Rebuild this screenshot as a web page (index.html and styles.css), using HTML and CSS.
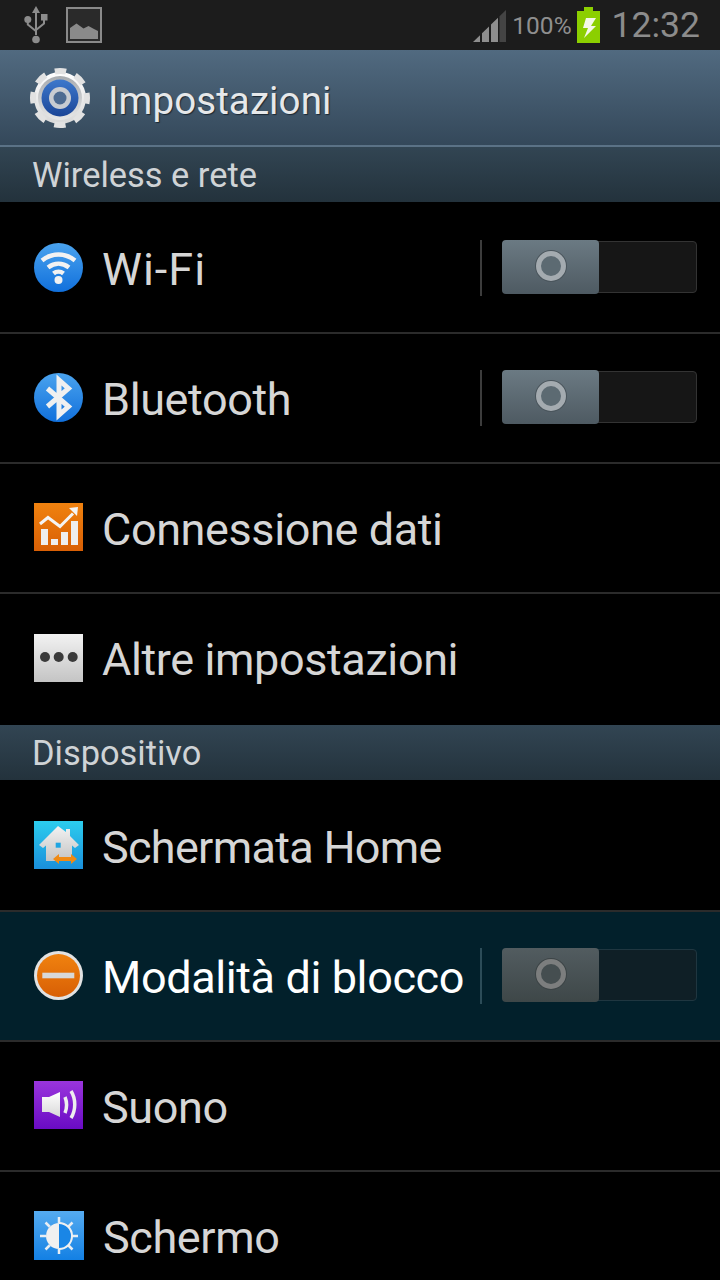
FILE: index.html
```html
<!DOCTYPE html>
<html lang="it">
<head>
	<meta charset="UTF-8">
	<title>Impostazioni</title>
	<link rel="stylesheet" href="styles.css">
</head>
<body>
	<svg class="defs" width="0" height="0">
		<defs>
			<linearGradient id="gBlue" x1="0" y1="0" x2="0" y2="1"><stop offset="0" stop-color="#4aa3ee"/><stop offset="1" stop-color="#1170dc"/></linearGradient>
			<linearGradient id="gOrange" x1="0" y1="0" x2="0" y2="1"><stop offset="0" stop-color="#f0820f"/><stop offset="1" stop-color="#d85f05"/></linearGradient>
			<linearGradient id="gGrey" x1="0" y1="0" x2="0" y2="1"><stop offset="0" stop-color="#f2f2f2"/><stop offset="1" stop-color="#c4c4c4"/></linearGradient>
			<linearGradient id="gHome" x1="0" y1="0" x2="0" y2="1"><stop offset="0" stop-color="#2ccdee"/><stop offset="1" stop-color="#1a8fdb"/></linearGradient>
			<linearGradient id="gPurple" x1="0" y1="0" x2="0" y2="1"><stop offset="0" stop-color="#9a35dc"/><stop offset="1" stop-color="#6a0bc4"/></linearGradient>
			<linearGradient id="gSun" x1="0" y1="0" x2="0" y2="1"><stop offset="0" stop-color="#55abf0"/><stop offset="1" stop-color="#1380e4"/></linearGradient>
			<linearGradient id="gWhite" x1="0" y1="0" x2="0" y2="1"><stop offset="0" stop-color="#ffffff"/><stop offset="1" stop-color="#d8d8d8"/></linearGradient>
			<linearGradient id="gGear" x1="0" y1="0" x2="0" y2="1"><stop offset="0" stop-color="#3d78cc"/><stop offset="1" stop-color="#1b4698"/></linearGradient>
			<linearGradient id="gSilver" x1="0" y1="0" x2="0" y2="1"><stop offset="0" stop-color="#a8acb0"/><stop offset="1" stop-color="#e8e8e8"/></linearGradient>
		</defs>
	</svg>

	<div class="statusBar">
		<svg class="usbIcon" width="24" height="38" viewBox="0 0 24 38">
			<path d="M12 0l4 7h-3v22h-2V7H8z" fill="#8c8c8c"/>
			<circle cx="12" cy="33.500" r="3.800" fill="#8c8c8c"/>
			<circle cx="3.800" cy="13.500" r="3.500" fill="#8c8c8c"/>
			<rect x="17" y="8" width="6.500" height="6.500" fill="#8c8c8c"/>
			<path d="M3.800 15v3.500l8 6.500M20 14v3.500l-8 6.500" fill="none" stroke="#8c8c8c" stroke-width="2"/>
		</svg>
		<svg class="picIcon" width="36" height="36" viewBox="0 0 36 36">
			<rect x="1" y="1" width="34" height="34" fill="#2a2a2a" stroke="#8a8a8a" stroke-width="2"/>
			<path d="M4 32V21l6.500-4.500 7 5 5-2.500 5.500 3 4 2v8z" fill="#8a8a8a"/>
		</svg>
		<div class="statusRight">
			<svg class="signalIcon" width="33" height="32" viewBox="0 0 33 32">
				<path d="M0 32l7-6.800V32z" fill="#8e8e8e"/>
				<path d="M9 23.300l7-6.800V32H9z" fill="#8e8e8e"/>
				<path d="M18 14.500l7-6.700V32h-7z" fill="#8e8e8e"/>
				<path d="M26.500 6.300L33 0v32h-6.500z" fill="#444444"/>
			</svg>
			<span class="batteryText">100%</span>
			<svg class="batteryIcon" width="23" height="36" viewBox="0 0 23 36">
				<path d="M7 0h9v4h7v32H0V4h7z" fill="#8ccf00"/>
				<path d="M9 11h10l-5 8h5L7 31l4-10H6z" fill="#f4f8e8"/>
			</svg>
			<span class="clock">12:32</span>
		</div>
	</div>

	<div class="actionBar">
		<svg class="gearIcon" width="60" height="62" viewBox="0 0 60 62">
			<circle cx="30" cy="31" r="26" fill="url(#gWhite)"/>
			<circle cx="30" cy="31" r="27" fill="none" stroke="#e2e2e2" stroke-width="6" stroke-dasharray="11.500 9.706" stroke-dashoffset="5.750"/>
			<circle cx="30" cy="31" r="22" fill="url(#gSilver)"/>
			<circle cx="30" cy="31" r="18.500" fill="url(#gGear)"/>
			<circle cx="30" cy="31" r="11" fill="#c8ccd2"/>
			<circle cx="30" cy="31" r="6.500" fill="#4d6b92"/>
		</svg>
		<span class="actionTitle">Impostazioni</span>
	</div>

	<div class="sectionHead">Wireless e rete</div>
	<div class="row first">
		<svg class="icon" width="49" height="49" viewBox="0 0 49 49">
			<circle cx="24.500" cy="24.500" r="24.500" fill="url(#gBlue)"/>
			<path d="M8 17.500c10-8 23-8 33 0M14 24.500c6.500-5 14.500-5 21 0M19.500 30.500c3-2.500 7-2.500 10 0" fill="none" stroke="#f2f2f2" stroke-width="4.500"/>
			<circle cx="24.500" cy="37" r="4" fill="#f2f2f2"/>
		</svg>
		<span class="rowText wifi">Wi-Fi</span>
		<div class="switch">
			<div class="thumb"><i></i></div>
		</div>
	</div>
	<div class="row">
		<svg class="icon" width="49" height="49" viewBox="0 0 49 49">
			<circle cx="24.500" cy="24.500" r="24.500" fill="url(#gBlue)"/>
			<path d="M13.500 15.500l21 18-9.500 8.500V7l9.500 8.500-21 18" fill="none" stroke="#f0f0f0" stroke-width="5"/>
		</svg>
		<span class="rowText">Bluetooth</span>
		<div class="switch">
			<div class="thumb"><i></i></div>
		</div>
	</div>
	<div class="row">
		<svg class="icon" width="49" height="48" viewBox="0 0 49 48">
			<rect width="49" height="48" fill="url(#gOrange)"/>
			<rect x="7" y="26" width="7" height="16" fill="#eeeeee"/>
			<rect x="17" y="36" width="7" height="6" fill="#eeeeee"/>
			<rect x="27" y="29" width="7" height="13" fill="#eeeeee"/>
			<rect x="37" y="18" width="7" height="24" fill="#eeeeee"/>
			<path d="M6 21l8-6.500 12 9 13-13" fill="none" stroke="#f4f4f4" stroke-width="3"/>
			<path d="M35 5l9-1-1 9z" fill="#f4f4f4"/>
		</svg>
		<span class="rowText">Connessione dati</span>
	</div>
	<div class="row last">
		<svg class="icon" width="49" height="48" viewBox="0 0 49 48">
			<rect width="49" height="48" fill="url(#gGrey)"/>
			<circle cx="11" cy="23" r="5" fill="#3a3a3a"/>
			<circle cx="24.700" cy="23" r="5" fill="#3a3a3a"/>
			<circle cx="38.700" cy="23" r="5" fill="#3a3a3a"/>
		</svg>
		<span class="rowText">Altre impostazioni</span>
	</div>

	<div class="sectionHead">Dispositivo</div>
	<div class="row first">
		<svg class="icon" width="49" height="48" viewBox="0 0 49 48">
			<rect width="49" height="48" fill="url(#gHome)"/>
			<path d="M24 5L5 24l4 3 3-2.500V40h26V24.500l3 2.500 4-3-9-9V8h-4v3z" fill="url(#gGrey)"/>
			<rect x="21.700" y="21.700" width="5" height="5" fill="#1fa5e2"/>
			<path d="M19 38l6-5v3h12v-3l6 5-6 5v-3H25v3z" fill="#f08a14"/>
		</svg>
		<span class="rowText tight">Schermata Home</span>
	</div>
	<div class="row active">
		<svg class="icon" width="49" height="49" viewBox="0 0 49 49">
			<circle cx="24.500" cy="24.500" r="24.500" fill="#e2e2e2"/>
			<circle cx="24.500" cy="24.500" r="21.500" fill="url(#gOrange)"/>
			<rect x="8.300" y="21.700" width="32" height="5.600" fill="#d8d8d8"/>
		</svg>
		<span class="rowText">Modalità di blocco</span>
		<div class="switch">
			<div class="thumb"><i></i></div>
		</div>
	</div>
	<div class="row">
		<svg class="icon" width="49" height="48" viewBox="0 0 49 48">
			<rect width="49" height="48" fill="url(#gPurple)"/>
			<path d="M8 16h7l11-5v25l-11-5H8z" fill="url(#gWhite)"/>
			<path d="M31 16c2 5 2 11 0 16M37 10c5 8 5 19 0 27" fill="none" stroke="#eeeeee" stroke-width="3.500"/>
		</svg>
		<span class="rowText">Suono</span>
	</div>
	<div class="row">
		<svg class="icon" width="50" height="49" viewBox="0 0 50 49">
			<rect width="50" height="49" fill="url(#gSun)"/>
			<path d="M25 6v37M6 25h38M11.500 11.500l27 27M38.500 11.500l-27 27" stroke="#e8eef4" stroke-width="2.500"/>
			<circle cx="25" cy="25" r="13" fill="#1a86e6"/>
			<path d="M25 12a13 13 0 0 0 0 26z" fill="#f0f0f0"/>
			<path d="M25 12a13 13 0 0 1 0 26" fill="none" stroke="#f0f0f0" stroke-width="2"/>
		</svg>
		<span class="rowText">Schermo</span>
	</div>
</body>
</html>
```
FILE: styles.css
```css
*{
	margin: 0;
	padding: 0;
	box-sizing: border-box;
}
html,body{
	width: 720px;
	height: 1280px;
	overflow: hidden;
	background-color: #000;
}
body{
	font-family: Roboto, "Liberation Sans", sans-serif;
}
.defs{
	display: block;
	height: 0;
}
.statusBar{
	height: 50px;
	background-color: #1c1c1c;
	display: flex;
	align-items: center;
	padding: 0 20px 0 24px;
}
.usbIcon{
	margin-right: 18px;
}
.statusRight{
	margin-left: auto;
	display: flex;
	align-items: center;
}
.signalIcon{
	margin-right: 6px;
	margin-top: 2px;
}
.batteryText{
	font-size: 24.500px;
	color: #8f8f8f;
	margin-right: 5px;
}
.batteryIcon{
	margin-right: 12px;
}
.clock{
	font-size: 35.500px;
	color: #8c8c8c;
}
.actionBar{
	height: 97px;
	background: linear-gradient(#516a80, #34485a);
	border-bottom: 2px solid #5b7286;
	display: flex;
	align-items: center;
	padding-left: 30px;
}
.actionTitle{
	font-size: 38.500px;
	letter-spacing: 0.100px;
	color: #e6e8ea;
	margin-left: 18px;
	padding-top: 6px;
	text-shadow: 1px 1px 1px #1c2833;
}
.sectionHead{
	height: 55px;
	line-height: 57px;
	padding-left: 32px;
	font-size: 34.400px;
	color: #cfd3d6;
	background: linear-gradient(#324553, #23323c);
}
.row{
	height: 130px;
	padding-bottom: 2px;
	border-bottom: 2px solid #2b2b2b;
	display: flex;
	align-items: center;
	padding-left: 34px;
}
.row.first{
	height: 132px;
	padding-bottom: 0;
}
.row.last{
	height: 131px;
	padding-bottom: 4px;
	border-bottom: none;
}
.row.active{
	background-color: #02202b;
}
.icon{
	margin-right: 20px;
	flex-shrink: 0;
}
.rowText{
	font-size: 45px;
	letter-spacing: -0.400px;
	padding-top: 4px;
	color: #d6d6d6;
	white-space: nowrap;
	margin-left: -1px;
}
.rowText.wifi{
	letter-spacing: 1px;
}
.rowText.tight{
	letter-spacing: -0.700px;
}
.row.active .rowText{
	color: #fff;
}
.switch{
	margin-left: auto;
	margin-right: 23px;
	width: 195px;
	height: 52px;
	background-color: #161616;
	border: 1px solid #333;
	border-radius: 4px;
	position: relative;
}
.switch:before{
	content: "";
	position: absolute;
	left: -23px;
	top: -2px;
	width: 2px;
	height: 56px;
	background-color: #3c3c3c;
}
.thumb{
	position: absolute;
	left: -1px;
	top: -2px;
	width: 97px;
	height: 54px;
	border-radius: 4px;
	background: linear-gradient(#6b7a83, #4e5a62);
	display: flex;
	align-items: center;
	justify-content: center;
}
.thumb i{
	display: block;
	width: 30px;
	height: 30px;
	border-radius: 50%;
	border: 5px solid #a4abb0;
	background-color: #5c6a72;
	box-shadow: 0 0 0 1px #4a555c;
	margin-top: -2px;
}
.row.active .switch{
	background-color: #0f1f26;
	border-color: #1f3640;
}
.row.active .switch:before{
	background-color: #2c4c58;
}
.row.active .thumb{
	background: linear-gradient(#525c60, #3e4748);
}
.row.active .thumb i{
	border-color: #7c7e7e;
	background-color: #454e50;
	box-shadow: 0 0 0 1px #3c4446;
}
```
